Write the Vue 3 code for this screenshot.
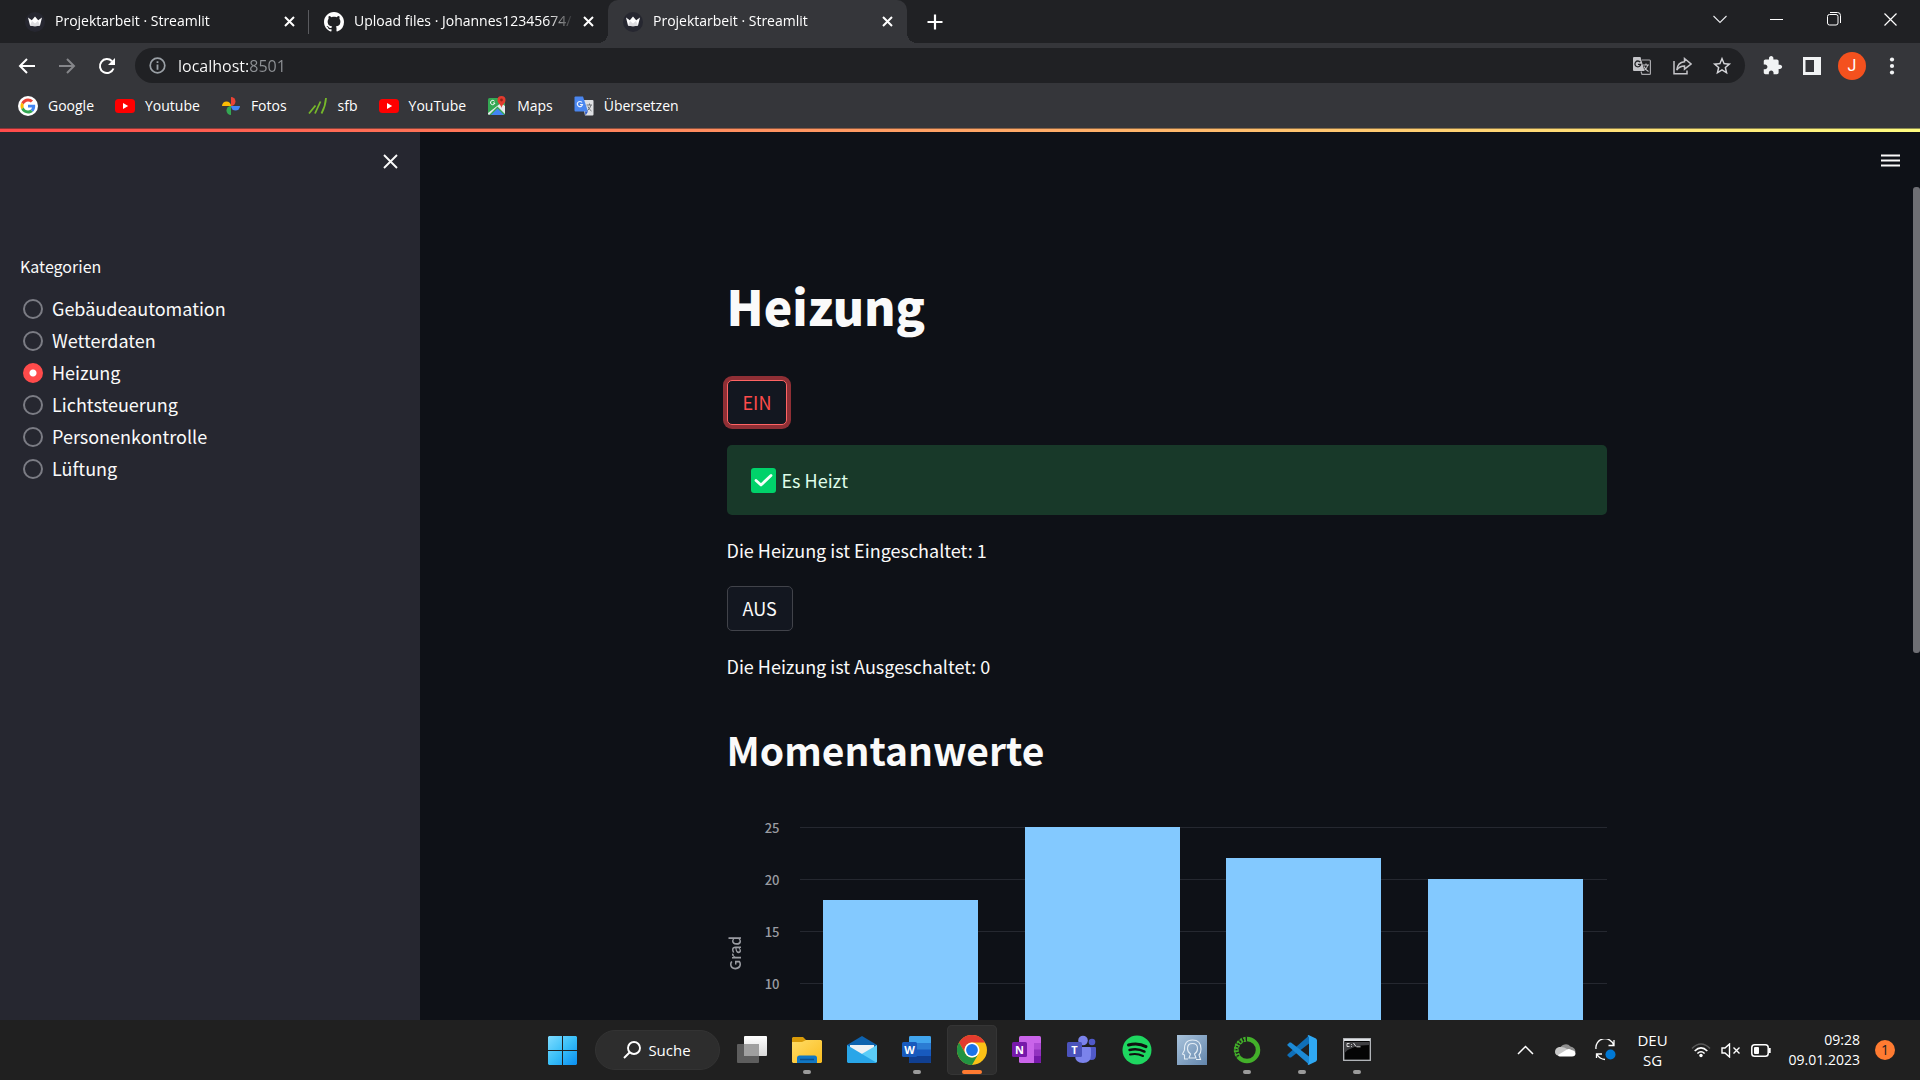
<script setup>
import { ref } from 'vue'

const categories = ['Gebäudeautomation', 'Wetterdaten', 'Heizung', 'Lichtsteuerung', 'Personenkontrolle', 'Lüftung']
const selected = ref('Heizung')
const address = ref('localhost:8501')

const ticks = [25, 20, 15, 10]
const bars = [18, 25, 22, 20]
const barHeight = (v) => (v / 25) * 100 + '%'

const bookmarks = [
  { id: 'google', label: 'Google' },
  { id: 'youtube', label: 'Youtube' },
  { id: 'photos', label: 'Fotos' },
  { id: 'sfb', label: 'sfb' },
  { id: 'youtube', label: 'YouTube' },
  { id: 'maps', label: 'Maps' },
  { id: 'translate', label: 'Übersetzen' },
]

const tabs = [
  { title: 'Projektarbeit · Streamlit', icon: 'crown' },
  { title: 'Upload files · Johannes12345674/', icon: 'github' },
  { title: 'Projektarbeit · Streamlit', icon: 'crown', active: true },
]

const apps = [
  { id: 'taskview', name: 'Taskansicht' },
  { id: 'explorer', name: 'Explorer', open: true },
  { id: 'mail', name: 'Mail' },
  { id: 'word', name: 'Word', open: true },
  { id: 'chrome', name: 'Chrome', open: true, active: true },
  { id: 'onenote', name: 'OneNote' },
  { id: 'teams', name: 'Teams' },
  { id: 'spotify', name: 'Spotify' },
  { id: 'head', name: 'Viewer' },
  { id: 'anaconda', name: 'Anaconda', open: true },
  { id: 'vscode', name: 'Visual Studio Code', open: true },
  { id: 'cmd', name: 'Eingabeaufforderung', open: true },
]
</script>

<template>
  <div class="screen">
    <header class="browser">
      <div class="tabstrip">
        <div v-for="(tab, i) in tabs" :key="i" class="tab" :class="{ active: tab.active, divided: i === 0 }">
          <svg v-if="tab.icon === 'crown'" class="favicon" viewBox="0 0 20 20">
            <circle cx="10" cy="10" r="10" fill="#262730" />
            <path d="M3 5.600L6.800 8.200L10 4.600L13.200 8.200L17 5.600L15 13.600Q10 15 5 13.600Z" fill="#fff" />
            <path d="M5 13.600L7 9L10 11.500L13 9L15 13.600Q10 15 5 13.600Z" fill="#dcdcdf" />
          </svg>
          <svg v-else class="favicon" viewBox="0 0 16 16">
            <path fill="#fff" d="M8 0C3.580 0 0 3.580 0 8c0 3.540 2.290 6.530 5.470 7.590.4.070.550-.170.550-.380 0-.190-.010-.820-.010-1.490-2.010.370-2.530-.490-2.690-.940-.090-.230-.480-.940-.820-1.130-.280-.150-.680-.520-.010-.530.630-.010 1.080.580 1.230.820.720 1.210 1.870.870 2.330.660.070-.520.280-.870.510-1.070-1.780-.2-3.640-.890-3.640-3.950 0-.870.310-1.590.820-2.150-.080-.2-.360-1.020.080-2.120 0 0 .670-.210 2.200.820.640-.180 1.320-.270 2-.270s1.360.090 2 .270c1.530-1.040 2.200-.820 2.200-.820.440 1.100.160 1.920.080 2.120.510.560.820 1.270.820 2.150 0 3.070-1.870 3.750-3.650 3.950.290.250.540.730.540 1.480 0 1.070-.010 1.930-.010 2.200 0 .210.150.460.550.380A8.010 8.010 0 0 0 16 8c0-4.420-3.580-8-8-8z" />
          </svg>
          <span class="tab-title">{{ tab.title }}</span>
          <button class="icon-btn tab-close" aria-label="Tab schließen">
            <svg width="11" height="11" viewBox="0 0 11 11"><path d="M1 1L10 10M10 1L1 10" stroke="#fff" stroke-width="2" /></svg>
          </button>
        </div>
        <button class="icon-btn new-tab" aria-label="Neuer Tab">
          <svg width="16" height="16" viewBox="0 0 16 16"><path d="M8 0.500V15.500M0.500 8H15.500" stroke="#fff" stroke-width="2.200" /></svg>
        </button>
        <div class="window-controls">
          <button class="icon-btn" aria-label="Tabs durchsuchen">
            <svg width="14" height="9" viewBox="0 0 14 9"><path d="M0.500 1L7 7.500L13.500 1" fill="none" stroke="#e8eaed" stroke-width="1.100" /></svg>
          </button>
          <button class="icon-btn" aria-label="Minimieren">
            <svg width="13" height="13" viewBox="0 0 13 13"><path d="M0 6.500H13" stroke="#fff" /></svg>
          </button>
          <button class="icon-btn" aria-label="Verkleinern">
            <svg width="14" height="14" viewBox="0 0 14 14" fill="none" stroke="#fff"><rect x="0.500" y="2.500" width="10.500" height="10.500" rx="2" /><path d="M3 0.500H10.500Q13.500 0.500 13.500 3.500V11" /></svg>
          </button>
          <button class="icon-btn" aria-label="Schließen">
            <svg width="13" height="13" viewBox="0 0 13 13"><path d="M0.500 0.500L12.500 12.500M12.500 0.500L0.500 12.500" stroke="#fff" stroke-width="1.200" /></svg>
          </button>
        </div>
      </div>

      <div class="toolbar">
        <nav class="nav-buttons">
          <button class="icon-btn" aria-label="Zurück">
            <svg width="18" height="16" viewBox="0 0 18 16" fill="none" stroke="#fff" stroke-width="2"><path d="M17 8H2M9 1L2 8L9 15" /></svg>
          </button>
          <button class="icon-btn" aria-label="Vorwärts">
            <svg width="18" height="16" viewBox="0 0 18 16" fill="none" stroke="#85868a" stroke-width="2"><path d="M1 8H16M9 1L16 8L9 15" /></svg>
          </button>
          <button class="icon-btn" aria-label="Neu laden">
            <svg width="18" height="18" viewBox="0 0 18 18"><path d="M15.500 11.500A7 7 0 1 1 14 4.200" fill="none" stroke="#fff" stroke-width="2" /><path d="M17 1V8H10Z" fill="#fff" /></svg>
          </button>
        </nav>
        <div class="omnibox">
          <svg width="17" height="17" viewBox="0 0 17 17"><circle cx="8.500" cy="8.500" r="7.300" fill="none" stroke="#9aa0a6" stroke-width="1.700" /><path d="M8.500 4.200V6M8.500 7.500V12.800" stroke="#9aa0a6" stroke-width="1.800" /></svg>
          <input v-model="address" class="address" type="text" aria-label="Adresse" />
          <button class="icon-btn" aria-label="Übersetzen">
            <svg width="18" height="18" viewBox="0 0 18 18">
              <path d="M9 3H16.500Q17.400 3 17.400 4V16.500Q17.400 17.400 16.500 17.400H9L8 14.500" fill="none" stroke="#a9a9ad" stroke-width="1.200" />
              <path d="M1 0H7.500L11.500 14H1Q0 14 0 13V1Q0 0 1 0Z" fill="#c4c4c8" />
              <path d="M7.200 5.200A2.900 2.900 0 1 0 7.700 7.400H5" fill="none" stroke="#202124" stroke-width="1.300" />
              <path d="M10 8H16M13 6.500V8M14.800 8Q14 11.500 11.500 13M11 9.500Q12.500 13 15.500 14.500" fill="none" stroke="#c4c4c8" stroke-width="1.100" />
            </svg>
          </button>
          <button class="icon-btn" aria-label="Teilen">
            <svg width="19" height="18" viewBox="0 0 19 18" fill="none" stroke="#c4c4c8" stroke-width="1.500"><path d="M1 4V16.800H14V13.500" /><path d="M11.500 1.500L18 7L11.500 12.200V9Q6.500 9 3.800 13Q4.500 5.500 11.500 4.800Z" /></svg>
          </button>
          <button class="icon-btn" aria-label="Lesezeichen">
            <svg width="22" height="22" viewBox="0 0 24 24"><path fill="#d5d6da" d="M22 9.240l-7.190-.620L12 2 9.190 8.630 2 9.240l5.460 4.730L5.820 21 12 17.270 18.180 21l-1.630-7.030L22 9.240zM12 15.400l-3.760 2.270 1-4.280-3.320-2.880 4.380-.380L12 6.100l1.710 4.040 4.380.380-3.320 2.880 1 4.280L12 15.400z" /></svg>
          </button>
        </div>
        <div class="actions">
          <button class="icon-btn" aria-label="Erweiterungen">
            <svg width="21" height="21" viewBox="0 0 24 24"><path fill="#f1f3f4" d="M20.500 11H19V7c0-1.100-.9-2-2-2h-4V3.500C13 2.120 11.880 1 10.500 1S8 2.120 8 3.500V5H4c-1.100 0-1.990.9-1.990 2v3.800H3.500c1.490 0 2.700 1.210 2.700 2.700s-1.210 2.700-2.700 2.700H2V20c0 1.100.9 2 2 2h3.800v-1.500c0-1.490 1.210-2.700 2.700-2.700 1.490 0 2.700 1.210 2.700 2.700V22H17c1.100 0 2-.9 2-2v-4h1.500c1.380 0 2.500-1.120 2.500-2.500S21.880 11 20.500 11z" /></svg>
          </button>
          <button class="icon-btn" aria-label="Seitenleiste">
            <svg width="18" height="18" viewBox="0 0 18 18"><path fill="#f1f3f4" fill-rule="evenodd" d="M0 0H18V18H0ZM2.500 3V15H11V3Z" /></svg>
          </button>
          <button class="icon-btn avatar" aria-label="Profil">J</button>
          <button class="icon-btn" aria-label="Menü">
            <svg width="6" height="18" viewBox="0 0 6 18" fill="#f1f3f4"><circle cx="3" cy="2.500" r="2.100" /><circle cx="3" cy="9" r="2.100" /><circle cx="3" cy="15.500" r="2.100" /></svg>
          </button>
        </div>
      </div>

      <nav class="bookmarks">
        <a v-for="(b, i) in bookmarks" :key="i" href="#">
          <svg v-if="b.id === 'google'" viewBox="0 0 20 20">
            <circle cx="10" cy="10" r="10" fill="#fff" />
            <g transform="translate(2.500 2.500) scale(.3125)">
              <path fill="#EA4335" d="M24 9.500c3.540 0 6.710 1.220 9.210 3.600l6.850-6.850C35.900 2.380 30.470 0 24 0 14.620 0 6.510 5.380 2.560 13.220l7.980 6.190C12.430 13.720 17.740 9.500 24 9.500z" />
              <path fill="#4285F4" d="M46.980 24.550c0-1.570-.150-3.090-.380-4.550H24v9.020h12.940c-.580 2.960-2.260 5.480-4.780 7.180l7.730 6c4.510-4.180 7.090-10.360 7.090-17.650z" />
              <path fill="#FBBC05" d="M10.530 28.590c-.480-1.450-.760-2.990-.760-4.590s.270-3.140.760-4.590l-7.980-6.190C.920 16.460 0 20.120 0 24c0 3.880.920 7.540 2.560 10.780l7.970-6.190z" />
              <path fill="#34A853" d="M24 48c6.480 0 11.930-2.130 15.890-5.810l-7.730-6c-2.150 1.450-4.920 2.300-8.160 2.300-6.260 0-11.570-4.220-13.470-9.910l-7.980 6.190C6.510 42.620 14.620 48 24 48z" />
            </g>
          </svg>
          <svg v-else-if="b.id === 'youtube'" viewBox="0 0 20 20"><rect y="3" width="20" height="14" rx="3.500" fill="#f00" /><path d="M8 7L13.200 10L8 13Z" fill="#fff" /></svg>
          <svg v-else-if="b.id === 'photos'" viewBox="0 0 20 20">
            <path d="M10 1A4.500 4.500 0 0 1 10 10Z" fill="#ea4335" />
            <path d="M1 10A4.500 4.500 0 0 1 10 10Z" fill="#fbbc04" />
            <path d="M10 10A4.500 4.500 0 0 0 19 10Z" fill="#4285f4" />
            <path d="M10 19A4.500 4.500 0 0 1 10 10Z" fill="#34a853" />
          </svg>
          <svg v-else-if="b.id === 'sfb'" viewBox="0 0 20 20" fill="none" stroke="#76b82a" stroke-width="1.800"><path d="M1 17.500L7.500 9.500M7 17.500L12.500 5.500M13.500 17.500Q17.500 10 18 2" /></svg>
          <svg v-else-if="b.id === 'maps'" viewBox="0 0 20 20">
            <rect x="1" y="2" width="17" height="17" rx="1.500" fill="#34a853" />
            <path d="M2 19L10.500 10.500L18 18V10L14 7L1 17V18Z" fill="#e8eaed" />
            <path d="M4 19L10.500 12.500L17 19Z" fill="#4285f4" />
            <path d="M7.500 5.200A2.200 2.200 0 1 0 7.900 7H6" fill="none" stroke="#fff" />
            <path d="M14.500 0A4 4 0 0 1 18.500 4C18.500 7.500 15 8.500 14.500 12C14 8.500 10.500 7.500 10.500 4A4 4 0 0 1 14.500 0Z" fill="#e33b2e" /><circle cx="14.500" cy="4" r="1.400" fill="#8f2318" />
          </svg>
          <svg v-else viewBox="0 0 20 20">
            <path d="M8 4H18.500Q19.500 4 19.500 5V18.500Q19.500 19.500 18.500 19.500H11Z" fill="#dfe0e3" />
            <path d="M1.500 0.500H9L14 15.500H1.500Q0.500 15.500 0.500 14.500V1.500Q0.500 0.500 1.500 0.500Z" fill="#4a86ef" />
            <path d="M11 15.500H14L11.500 19.500Z" fill="#2a56c6" />
            <path d="M8 6.500A2.600 2.600 0 1 0 8.500 8.500H6" fill="none" stroke="#e8f0fe" stroke-width="1.200" />
            <path d="M12.500 9H18M15.500 7.500V9M17 9Q16 13 13.500 14.500M14 10.500Q15 13.500 17.500 15" fill="none" stroke="#6d7075" stroke-width="1" />
          </svg>
          <span>{{ b.label }}</span>
        </a>
      </nav>
    </header>

    <div class="decoration"></div>

    <div class="page">
      <aside class="sidebar">
        <div class="sidebar-top">
          <button class="icon-btn" aria-label="Seitenleiste schließen">
            <svg width="15" height="15" viewBox="0 0 15 15"><path d="M1 1L14 14M14 1L1 14" stroke="#fafafa" stroke-width="1.900" /></svg>
          </button>
        </div>
        <fieldset class="radio-group">
          <legend>Kategorien</legend>
          <label v-for="c in categories" :key="c">
            <input v-model="selected" type="radio" name="category" :value="c" />
            <span>{{ c }}</span>
          </label>
        </fieldset>
      </aside>

      <main class="main">
        <button class="icon-btn menu" aria-label="Hauptmenü">
          <svg width="19" height="14" viewBox="0 0 19 14"><path d="M0 1.500H19M0 6.500H19M0 11.500H19" stroke="#fafafa" stroke-width="2" /></svg>
        </button>
        <div class="scroll-area">
          <div class="content">
            <h1>Heizung</h1>
            <button class="btn focused">EIN</button>
            <div class="alert" role="alert">
              <svg width="25" height="25" viewBox="0 0 25 25"><rect width="25" height="25" rx="3" fill="#00d26a" /><path d="M5 12.500L10 17L20 7.500" fill="none" stroke="#f4fff8" stroke-width="2.800" stroke-linecap="round" stroke-linejoin="round" /></svg>
              <span>Es Heizt</span>
            </div>
            <p>Die Heizung ist Eingeschaltet: 1</p>
            <button class="btn">AUS</button>
            <p>Die Heizung ist Ausgeschaltet: 0</p>
            <h2>Momentanwerte</h2>
            <div class="chart">
              <div class="axis-title"><span>Grad</span></div>
              <div class="ticks"><span v-for="t in ticks" :key="t">{{ t }}</span></div>
              <div class="plot">
                <div v-for="t in ticks" :key="t" class="gridline"></div>
                <div class="bars">
                  <div v-for="(v, i) in bars" :key="i" class="bar" :style="{ height: barHeight(v) }"></div>
                </div>
              </div>
            </div>
          </div>
        </div>
        <div class="scrollbar"><div class="thumb"></div></div>
      </main>
    </div>

    <footer class="taskbar">
      <div class="tray-balance"></div>
      <div class="dock">
        <button class="icon-btn start" aria-label="Start">
          <svg width="29" height="29" viewBox="0 0 29 29">
            <defs><linearGradient id="win" gradientUnits="userSpaceOnUse" x1="0" y1="0" x2="29" y2="29"><stop offset="0" stop-color="#7fdcff" /><stop offset=".5" stop-color="#39bff8" /><stop offset="1" stop-color="#0a8ef0" /></linearGradient></defs>
            <path fill="url(#win)" d="M1 0H14V14H0V1ZM15 0H28L29 1V14H15ZM0 15H14V29H1L0 28ZM15 15H29V28L28 29H15Z" />
          </svg>
        </button>
        <button class="search">
          <svg width="18" height="18" viewBox="0 0 18 18" fill="none" stroke="#fff" stroke-width="1.900"><circle cx="11" cy="7" r="6" /><path d="M6.500 11.500L1 17" /></svg>
          <span>Suche</span>
        </button>
        <button v-for="a in apps" :key="a.id" class="icon-btn app" :class="{ open: a.open, active: a.active }" :aria-label="a.name">
          <svg v-if="a.id === 'taskview'" viewBox="0 0 30 30">
            <defs><linearGradient id="tv" x1="0" y1="0" x2="0" y2="1"><stop offset="0" stop-color="#fff" /><stop offset="1" stop-color="#d8d8d8" /></linearGradient></defs>
            <rect y="9" width="22" height="19" rx="1" fill="#5d5d5d" /><rect x="7" y="1" width="23" height="20" rx="1" fill="url(#tv)" /><rect x="7" y="9" width="15" height="12" fill="#9f9f9f" />
          </svg>
          <svg v-else-if="a.id === 'explorer'" viewBox="0 0 30 30">
            <defs><linearGradient id="fo" x1="0" y1="0" x2="1" y2="1"><stop offset="0" stop-color="#ffdc66" /><stop offset="1" stop-color="#fbbd1f" /></linearGradient></defs>
            <path d="M1 2H11L14 5V11H0V3Z" fill="#d89a08" /><path d="M0 7H10L14 5H29L30 6V27L29 28H1L0 27Z" fill="url(#fo)" />
            <path d="M5 28V23Q5 20.500 7.500 20.500H22.500Q25 20.500 25 23V28Z" fill="#1177c4" /><path d="M8 24.500H22" stroke="#0b4f8c" stroke-width="1.500" />
          </svg>
          <svg v-else-if="a.id === 'mail'" viewBox="0 0 30 30">
            <path d="M0 10L15 1L30 10V14H0Z" fill="#0d62ae" /><path d="M3 10H27V14L15 20L3 14Z" fill="#eef1f4" />
            <path d="M30 10L13 20L28 28L30 27Z" fill="#5bcdf8" /><path d="M0 10L30 28H1L0 27Z" fill="#29a6e8" />
          </svg>
          <svg v-else-if="a.id === 'word'" viewBox="0 0 30 30">
            <rect x="7" y="1" width="22" height="27" rx="1.500" fill="#2b7cd3" /><path d="M7 2.500Q7 1 8.500 1H27.500Q29 1 29 2.500V8H7Z" fill="#41a5ee" /><rect x="7" y="14.500" width="22" height="7" fill="#185abd" /><path d="M7 21H29V26.500Q29 28 27.500 28H8.500Q7 28 7 26.500Z" fill="#103f91" />
            <rect y="7" width="15" height="15" rx="1.500" fill="#185abd" /><text x="7.500" y="18.500" class="glyph">W</text>
          </svg>
          <svg v-else-if="a.id === 'chrome'" viewBox="0 0 30 30">
            <circle cx="15" cy="15" r="15" fill="#fbc116" />
            <path d="M2 7.500A15 15 0 0 1 28 7.500H15A7.500 7.500 0 0 0 8.500 18.750Z" fill="#e33b2e" />
            <path d="M2 7.500A15 15 0 0 0 15 30L21.500 18.750A7.500 7.500 0 0 1 8.500 18.750Z" fill="#229342" />
            <circle cx="15" cy="15" r="7.500" fill="#fff" /><circle cx="15" cy="15" r="5.900" fill="#1a73e8" />
          </svg>
          <svg v-else-if="a.id === 'onenote'" viewBox="0 0 30 30">
            <rect x="7" y="1" width="22" height="27" rx="1.500" fill="#ca64ea" /><rect x="22" y="8" width="7" height="7" fill="#ae4bd5" /><rect x="22" y="14.500" width="7" height="7" fill="#9332bf" /><path d="M22 21H29V26.500Q29 28 27.500 28H22Z" fill="#7719aa" />
            <rect y="7" width="15" height="15" rx="1.500" fill="#7719aa" /><text x="7.500" y="18.500" class="glyph">N</text>
          </svg>
          <svg v-else-if="a.id === 'teams'" viewBox="0 0 30 30">
            <circle cx="25" cy="7" r="3.300" fill="#5059c9" /><circle cx="16" cy="5.500" r="4.800" fill="#7b83eb" />
            <path d="M20 12H28Q29 12 29 13V20Q29 25 24.500 25Q20 25 20 20Z" fill="#5059c9" /><path d="M8 12H22.500Q24 12 24 13.500V20Q24 28 16 28Q8 28 8 20Z" fill="#7b83eb" />
            <rect y="7" width="15" height="15" rx="1.500" fill="#4b53bc" /><text x="7.500" y="18.500" class="glyph">T</text>
          </svg>
          <svg v-else-if="a.id === 'spotify'" viewBox="0 0 30 30">
            <circle cx="15" cy="15" r="14.500" fill="#1ed760" />
            <g fill="none" stroke="#101010" stroke-linecap="round"><path d="M6.500 10Q16 7.200 24 11.600" stroke-width="3" /><path d="M7.500 15Q15.500 12.800 22.500 16.600" stroke-width="2.400" /><path d="M8 19.500Q15 17.800 21 21" stroke-width="2" /></g>
          </svg>
          <svg v-else-if="a.id === 'head'" viewBox="0 0 30 30">
            <defs><linearGradient id="hd" x1="0" y1="0" x2="1" y2="1"><stop offset="0" stop-color="#a9c3dc" /><stop offset="1" stop-color="#6285ab" /></linearGradient></defs>
            <rect width="30" height="30" fill="url(#hd)" />
            <g fill="none" stroke="#e4edf5" stroke-width="1.100"><path d="M11 24H7.500V20L5.500 19L7.500 15Q7 5 15.500 5Q24 5 24 14Q24 18 22 20L23.500 24.500H19" /><path d="M12 23L13.500 19Q10.500 17 10.500 13.500Q10.500 8.500 15.500 8.500Q20.500 8.500 20.500 13.500Q20.500 17 17.500 19L19 23Z" /></g>
          </svg>
          <svg v-else-if="a.id === 'anaconda'" viewBox="0 0 30 30">
            <circle cx="15" cy="15" r="11" fill="none" stroke="#43b02a" stroke-width="4.500" /><path d="M15 4A11 11 0 0 0 7 22.500" fill="none" stroke="#202020" stroke-width="5" stroke-dasharray="1.500 1.700" />
            <path d="M13.500 2.800A12.400 12.400 0 0 0 5 22M14 6A9.400 9.400 0 0 0 8 21" fill="none" stroke="#43b02a" stroke-width="1.200" stroke-dasharray="2.500 1.500" />
          </svg>
          <svg v-else-if="a.id === 'vscode'" viewBox="0 0 30 30">
            <path d="M22 0.500V8.500L4 22.500L2.500 22.500L0.500 20.500V19.500Z" fill="#0f6fb8" /><path d="M22 29.500V21.500L4 7.500L2.500 7.500L0.500 9.500V10.500Z" fill="#1c8ad6" /><path d="M21.500 0L29 3.500L30 5V25L29 26.500L21.500 30L20.500 29L22 28V2L20.500 1Z" fill="#2fa8f3" />
          </svg>
          <svg v-else viewBox="0 0 30 30">
            <rect x="1.700" y="3.700" width="26.600" height="21.600" fill="#050505" stroke="#b9bcc0" stroke-width="1.300" /><path d="M2 5H28" stroke="#dfe2e5" stroke-width="2" /><path d="M2.500 7H27.500V10Q10 10 2.500 18Z" fill="#3f3f42" />
            <path d="M7.500 8.500H5V11.500H7.500M9.500 9V9.800M9.500 11V11.800M11.500 8L14 11.500M14.500 11.800H18.500" fill="none" stroke="#e8e8e8" stroke-width=".9" />
          </svg>
        </button>
      </div>
      <div class="tray">
        <button class="icon-btn" aria-label="Ausgeblendete Symbole">
          <svg width="17" height="10" viewBox="0 0 17 10"><path d="M1 9L8.500 1.500L16 9" fill="none" stroke="#fff" stroke-width="1.500" /></svg>
        </button>
        <svg class="cloud" width="21" height="14" viewBox="0 0 21 14"><path d="M5 8.500A6 5.500 0 0 1 15.500 3.500Q20.500 4.500 20.500 9H8Z" fill="#8f8f8f" /><path d="M4 4Q10 3.500 13 7L6 13Q0 13 0 9Q0 5 4 4Z" fill="#c8c8c8" /><path d="M3 12L12 6.500Q14 5.500 16.500 7Q20.500 7.500 20.500 10.500Q20.500 13.500 17 13.500H5Q3.500 13.500 3 12Z" fill="#fff" /></svg>
        <svg class="sync" width="22" height="22" viewBox="0 0 22 22"><path d="M1 10A9 9 0 0 1 18.500 6M19 1V6.500H13.500M1.500 19V15H7M2 15.500Q4.500 20 10 20.500" fill="none" stroke="#fff" stroke-width="1.300" /><circle cx="15.500" cy="15.500" r="5" fill="#0078d4" /></svg>
        <div class="lang">DEU<br />SG</div>
        <svg class="wifi" width="20" height="16" viewBox="0 0 20 16" fill="none" stroke-width="1.600"><path d="M1 6.500Q10 -2.500 19 6.500" stroke="#5a5a5a" /><path d="M3.700 9Q10 2.800 16.300 9M6.400 11.500Q10 8 13.600 11.500" stroke="#fff" /><circle cx="10" cy="13.500" r="1.700" fill="#fff" /></svg>
        <svg class="volume" width="20" height="15" viewBox="0 0 20 15" fill="none" stroke="#fff" stroke-width="1.400"><path d="M1 5V10H4L8.500 14V1L4 5Z" /><path d="M12.500 4.500L18.500 10.500M18.500 4.500L12.500 10.500" /></svg>
        <svg width="20" height="13" viewBox="0 0 20 13"><rect x=".8" y=".8" width="16.400" height="11.400" rx="2.800" fill="none" stroke="#fff" stroke-width="1.500" /><rect x="3" y="3" width="5" height="7" rx="1" fill="#fff" /><path d="M18.800 4V9" stroke="#fff" stroke-width="1.800" /></svg>
        <div class="clock">09:28<br />09.01.2023</div>
        <span class="badge">1</span>
      </div>
    </footer>
  </div>
</template>

<style>
body {
  margin: 0;
  background: #0e1117;
}
</style>

<style scoped>
.screen {
  height: 100vh;
  display: flex;
  flex-direction: column;
  overflow: hidden;
  color: #fafafa;
  font-family: "Noto Sans CJK SC", "Noto Sans", sans-serif;
}
.screen *,
.screen {
  box-sizing: border-box;
}
.screen svg {
  display: block;
  flex: none;
}
.icon-btn {
  display: flex;
  align-items: center;
  justify-content: center;
  flex: none;
  padding: 0;
  border: 0;
  background: none;
  color: inherit;
  font: inherit;
}

/* browser chrome */
.browser {
  flex: none;
  background: #35363a;
  color: #fff;
  font-family: "Open Sans", "Noto Sans", sans-serif;
  font-size: 14px;
}
.tabstrip {
  display: flex;
  height: 43px;
  padding-left: 10px;
  background: #202124;
}
.tab {
  position: relative;
  display: flex;
  align-items: center;
  flex: 0 1 299px;
  min-width: 0;
  padding: 0 14px 0 15px;
}
.tab.divided::after {
  content: "";
  position: absolute;
  right: 0;
  top: 10px;
  width: 1px;
  height: 24px;
  background: #5a5b5f;
}
.tab.active {
  background: #35363a;
  border-radius: 10px 10px 0 0;
}
.tab.active::before,
.tab.active::after {
  content: "";
  position: absolute;
  bottom: 0;
  width: 10px;
  height: 10px;
}
.tab.active::before {
  right: 100%;
  background: radial-gradient(circle at 0 0, #202124 10px, #35363a 10px);
}
.tab.active::after {
  left: 100%;
  background: radial-gradient(circle at 100% 0, #202124 10px, #35363a 10px);
}
.favicon {
  width: 20px;
  height: 20px;
  margin-right: 10px;
}
.tab-title {
  flex: 1;
  min-width: 0;
  height: 24px;
  line-height: 22px;
  overflow: hidden;
  white-space: nowrap;
  mask-image: linear-gradient(to right, #000 calc(100% - 26px), transparent);
}
.tab-close {
  width: 12px;
  margin-left: 8px;
}
.new-tab {
  width: 32px;
  margin-left: 12px;
}
.window-controls {
  display: flex;
  height: 38px;
  margin-left: auto;
  padding-right: 1px;
}
.window-controls .icon-btn {
  width: 57px;
}
.toolbar {
  display: flex;
  align-items: center;
  height: 45px;
  padding-right: 8px;
}
.nav-buttons {
  display: flex;
  width: 135px;
  padding-left: 7px;
}
.nav-buttons .icon-btn {
  width: 40px;
}
.omnibox {
  display: flex;
  align-items: center;
  flex: 1;
  min-width: 0;
  height: 35px;
  padding: 0 3px 0 14px;
  border-radius: 18px;
  background: #202124;
}
.omnibox .icon-btn {
  width: 40px;
}
.address {
  flex: 1;
  min-width: 0;
  height: 26px;
  margin-left: 12px;
  padding: 0;
  border: 0;
  outline: 0;
  color: transparent;
  background: linear-gradient(to right, #fff 70px, #8f9296 70px);
  background-clip: text;
  font: 16px/24px "Open Sans", "Noto Sans", sans-serif;
}
.actions {
  display: flex;
  align-items: center;
  padding-left: 7px;
}
.actions .icon-btn {
  width: 40px;
}
.actions .avatar {
  width: 28px;
  height: 28px;
  margin: 0 6px;
  border-radius: 50%;
  background: #f4511e;
  color: #fff;
  font: 16px/28px Roboto, sans-serif;
}
.bookmarks {
  display: flex;
  gap: 21px;
  height: 40px;
  padding: 0 18px 5px;
}
.bookmarks a {
  display: flex;
  align-items: center;
  gap: 10px;
  color: #fff;
  line-height: 20px;
  text-decoration: none;
}
.bookmarks svg {
  width: 20px;
  height: 20px;
}
.decoration {
  flex: none;
  height: 4px;
  background: linear-gradient(to right, #ff4b4b, #fffd80);
  box-shadow: inset 0 1px rgba(30, 30, 34, 0.5);
}

/* application page */
.page {
  display: flex;
  flex: 1;
  min-height: 0;
}
.sidebar {
  flex: none;
  width: 420px;
  background: #262730;
}
.sidebar-top {
  display: flex;
  justify-content: flex-end;
  height: 122px;
  padding: 12px 12px 0 0;
}
.sidebar-top .icon-btn {
  width: 35px;
  height: 35px;
}
.radio-group {
  display: flex;
  flex-direction: column;
  min-width: 0;
  margin: 0;
  padding: 0 20px;
  border: 0;
  font-size: 18px;
}
.radio-group legend {
  height: 24px;
  margin-bottom: 15px;
  padding: 0;
  font-size: 16px;
  line-height: 24px;
}
.radio-group label {
  display: flex;
  align-items: center;
  gap: 9px;
  height: 32px;
  padding-left: 3px;
  line-height: 30px;
}
.radio-group label span {
  height: 32px;
}
.radio-group input {
  appearance: none;
  flex: none;
  width: 20px;
  height: 20px;
  margin: 0;
  border: 2px solid #7b7c84;
  border-radius: 50%;
  background: #262730;
}
.radio-group input:checked {
  border-color: #ff4b4b;
  background: radial-gradient(circle, #fff 3px, #ff4b4b 4px);
}
.main {
  position: relative;
  display: flex;
  flex: 1;
  min-width: 0;
  background: #0e1117;
}
.menu {
  position: absolute;
  top: 15px;
  right: 15px;
  width: 30px;
  height: 27px;
}
.scroll-area {
  flex: 1;
  min-width: 0;
  overflow: hidden;
}
.scrollbar {
  flex: none;
  width: 7px;
  padding-top: 55px;
}
.thumb {
  height: 56%;
  max-height: 466px;
  border-radius: 3px;
  background: #6e6f74;
}
.content {
  display: flex;
  flex-direction: column;
  align-items: flex-start;
  gap: 20px;
  max-width: 880px;
  margin: 0 auto;
  padding-top: 143px;
  font-size: 18px;
  line-height: 31px;
}
h1 {
  margin: 0 0 25px;
  font-size: 48px;
  font-weight: 900;
  line-height: 60px;
}
h2 {
  margin: 22px 0 0;
  font-size: 39px;
  font-weight: 600;
  line-height: 50px;
}
p {
  margin: 0;
}
.btn {
  height: 45px;
  padding: 0 15px;
  border: 1px solid #41434a;
  border-radius: 5px;
  background: #131720;
  color: #fafafa;
  font: 18px/31px "Noto Sans CJK SC", "Noto Sans", sans-serif;
}
.btn.focused {
  border-color: #ff6464;
  color: #ff4b4b;
  box-shadow: 0 0 0 4px #8f2f35;
}
.alert {
  display: flex;
  align-items: center;
  gap: 6px;
  align-self: stretch;
  height: 70px;
  padding: 0 24px;
  border-radius: 5px;
  background: #183929;
  color: #dffde9;
}
.chart {
  display: flex;
  align-self: stretch;
  height: 260px;
  margin-top: 33px;
  color: #9a9ca2;
  font-size: 13px;
  font-weight: 500;
}
.axis-title {
  display: flex;
  align-items: center;
  justify-content: center;
  width: 16px;
  padding-bottom: 8px;
  font-size: 15px;
  line-height: 16px;
}
.axis-title span {
  writing-mode: vertical-rl;
  transform: rotate(180deg);
}
.ticks {
  display: flex;
  flex-direction: column;
  width: 37px;
  margin: -9px 20px 0 0;
  text-align: right;
}
.ticks span {
  height: 52px;
  line-height: 20px;
}
.plot {
  position: relative;
  flex: 1;
}
.gridline {
  height: 52px;
  border-top: 1px solid #252830;
}
.bars {
  position: absolute;
  inset: 0;
  display: flex;
  align-items: flex-end;
  justify-content: space-around;
}
.bar {
  width: 19.2%;
  background: #83c9ff;
}

/* taskbar */
.taskbar {
  display: flex;
  flex: none;
  align-items: center;
  height: 60px;
  background: #202020;
  color: #fff;
  font-family: "Open Sans", "Noto Sans", sans-serif;
}
.tray-balance {
  flex: 1;
}
.dock {
  display: flex;
  align-items: center;
  flex: none;
  gap: 5px;
  margin-left: 24px;
}
.dock .start {
  width: 50px;
  height: 50px;
}
.search {
  display: flex;
  align-items: center;
  justify-content: center;
  gap: 7px;
  width: 125px;
  height: 40px;
  margin: 0 2px;
  padding: 0;
  border: 1px solid #333;
  border-radius: 20px;
  background: #2d2d2d;
  color: #fff;
  font: 15px/24px "Open Sans", "Noto Sans", sans-serif;
}
.app {
  position: relative;
  width: 50px;
  height: 50px;
  border-radius: 5px;
}
.app svg {
  width: 30px;
  height: 30px;
}
.app.active {
  background: #2d2d2d;
  box-shadow: inset 0 0 0 1px #353535;
}
.app.open::after {
  content: "";
  position: absolute;
  bottom: 1px;
  left: 50%;
  width: 8px;
  height: 4px;
  margin-left: -4px;
  border-radius: 2px;
  background: #9a9a9a;
}
.app.active::after {
  width: 20px;
  margin-left: -10px;
  background: #ff7b31;
}
.glyph {
  fill: #fff;
  font: 700 11px "Open Sans", sans-serif;
  text-anchor: middle;
}
.tray {
  display: flex;
  align-items: center;
  justify-content: flex-end;
  flex: 1;
  padding-right: 25px;
  font-size: 14px;
  line-height: 20px;
}
.cloud {
  margin-left: 21px;
}
.sync {
  margin-left: 19px;
}
.lang {
  margin-left: 20px;
  font-size: 15px;
  text-align: center;
}
.wifi {
  margin-left: 23px;
}
.volume {
  margin: 0 10px;
}
.clock {
  margin-left: 18px;
  text-align: right;
}
.badge {
  width: 20px;
  height: 20px;
  margin-left: 15px;
  border-radius: 50%;
  background: #ff7b31;
  color: #202020;
  text-align: center;
}
</style>
